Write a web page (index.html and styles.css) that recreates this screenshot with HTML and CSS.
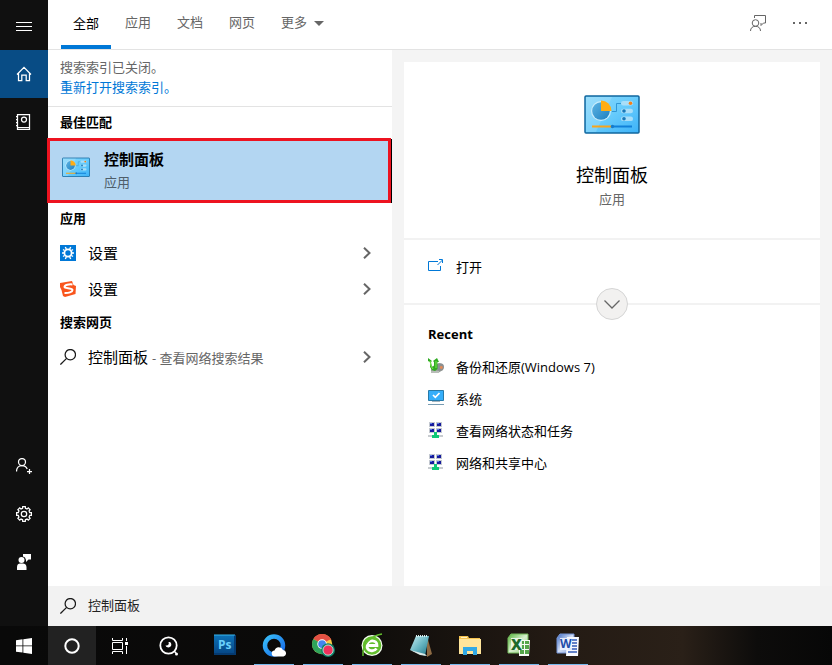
FILE: index.html
```html
<!DOCTYPE html>
<html lang="zh-CN">
<head>
<meta charset="utf-8">
<meta name="viewport" content="width=device-width, initial-scale=1">
<title>控制面板</title>
<link rel="stylesheet" href="styles.css">
</head>
<body>
<svg class="defs" aria-hidden="true">
  <defs>
    <linearGradient id="panel-bg" x1="0" y1="0" x2="1" y2="1">
      <stop offset="0" stop-color="#8ad8fb"/><stop offset=".5" stop-color="#68ccfc"/><stop offset="1" stop-color="#3cb2f8"/>
    </linearGradient>
    <linearGradient id="pie-blue" x1="0" y1="0" x2="1" y2="1">
      <stop offset="0" stop-color="#5db4e4"/><stop offset="1" stop-color="#1d7fc0"/>
    </linearGradient>
    <linearGradient id="ring-blue" x1="0" y1="0" x2="1" y2="1">
      <stop offset="0" stop-color="#38bdf8"/><stop offset="1" stop-color="#1668e8"/>
    </linearGradient>
    <linearGradient id="note-teal" x1="0" y1="0" x2="1" y2="1">
      <stop offset="0" stop-color="#c8eef2"/><stop offset=".5" stop-color="#69b6c2"/><stop offset="1" stop-color="#1d7386"/>
    </linearGradient>
    <linearGradient id="sheet-green" x1="0" y1="0" x2="1" y2="1">
      <stop offset="0" stop-color="#57b53c"/><stop offset=".5" stop-color="#d8efcf"/><stop offset="1" stop-color="#8dcb75"/>
    </linearGradient>
    <linearGradient id="doc-blue" x1="0" y1="0" x2="1" y2="1">
      <stop offset="0" stop-color="#3d6bc4"/><stop offset=".5" stop-color="#d3def4"/><stop offset="1" stop-color="#7f9fdd"/>
    </linearGradient>
    <linearGradient id="ps-blue" x1="0" y1="0" x2="0" y2="1">
      <stop offset="0" stop-color="#0d73b8"/><stop offset="1" stop-color="#064887"/>
    </linearGradient>
    <symbol id="control-panel" viewBox="0 0 56 40">
      <rect x="1" y="2" width="54" height="37" rx="1" fill="url(#panel-bg)" stroke="#10679f" stroke-width="1.5"/>
      <path d="M2 3h26L12 38H2z" fill="#fff" opacity=".15"/>
      <circle cx="17" cy="17" r="10" fill="#c9ecfb"/>
      <circle cx="17" cy="17" r="8.8" fill="url(#pie-blue)"/>
      <path d="M17 17V6.500A10.500 10.500 0 0 1 27.500 17z" fill="#ffad14"/>
      <path d="M28 17.500h4.500v-8H37" fill="none" stroke="#3197d5"/>
      <rect x="37" y="7" width="12" height="4.500" rx="2.200" fill="#a9def8"/><circle cx="46.500" cy="9.200" r="1.800" fill="#f28018"/>
      <rect x="37" y="14.800" width="12" height="4.500" rx="2.200" fill="#a9def8"/><circle cx="40" cy="17" r="1.800" fill="#1878b8"/>
      <rect x="37" y="22.600" width="12" height="4.500" rx="2.200" fill="#a9def8"/><circle cx="40" cy="24.800" r="1.800" fill="#1878b8"/>
      <path d="M8 32.500h20" stroke="#f9a51a" stroke-width="2"/><path d="M30 32.500h18" stroke="#1180d8" stroke-width="2"/>
      <circle cx="28.500" cy="32.500" r="1.800" fill="#147ccd"/>
    </symbol>
    <symbol id="gear" viewBox="-8 -8 16 16">
      <path d="M5.720 -1.430L7.390 -1.300 7.390 1.300 5.720 1.430 5.060 3.030 6.140 4.310 4.310 6.140 3.030 5.060 1.430 5.720 1.300 7.390 -1.300 7.390 -1.430 5.720 -3.030 5.060 -4.310 6.140 -6.140 4.310 -5.060 3.030 -5.720 1.430 -7.390 1.300 -7.390 -1.300 -5.720 -1.430 -5.060 -3.030 -6.140 -4.310 -4.310 -6.140 -3.030 -5.060 -1.430 -5.720 -1.300 -7.390 1.300 -7.390 1.430 -5.720 3.030 -5.060 4.310 -6.140 6.140 -4.310 5.060 -3.030z"/>
      <circle r="2.700"/>
    </symbol>
    <symbol id="search" viewBox="0 0 16 16">
      <circle cx="10.300" cy="5.700" r="5.200"/><path d="M6.600 9.400L.4 15.600"/>
    </symbol>
    <symbol id="chevron" viewBox="0 0 8 12"><path d="M1 .8L6.500 6 1 11.200"/></symbol>
    <symbol id="network" viewBox="0 0 16 16">
      <path d="M1 0h6v5H1zM8 0h6v5H8zM1 6h6v5H1zM8 6h6v5H8z" fill="#c3c8d0"/>
      <path d="M2 1h4v3H2zM9 1h4v3H9zM2 7h4v3H2zM9 7h4v3H9z" fill="#161a9c"/>
      <path d="M2 1h2v1H2zM9 1h2v1H9zM2 7h2v1H2zM9 7h2v1H9z" fill="#5a7ce8"/>
      <path d="M0 13h15v2H0z" fill="#c8ccd0"/><path d="M6 10h3v3h2v3H4v-3h2z" fill="#10c878"/>
    </symbol>
  </defs>
</svg>

<div class="screen">
  <div class="search-window">
    <nav class="rail" aria-label="导航">
      <button class="rail-item" aria-label="菜单"><svg class="icon16 line" viewBox="0 0 16 16"><path d="M0 4.500h16M0 8.500h16M0 12.500h16"/></svg></button>
      <button class="rail-item rail-item--active" aria-label="主页"><svg class="icon16 line bold" viewBox="0 0 16 16"><path d="M1 8.500L8 1.300l7 7.200M2.500 7.500v7h3.300V9h4.400v5.500h3.300v-7"/></svg></button>
      <button class="rail-item" aria-label="笔记本"><svg class="icon16 line bold" viewBox="0 0 16 16"><path d="M1.500 .5h12v15h-12zM2 13.500h11.500M0 2.500h2M0 5.500h2M0 8.500h2M0 11.500h2"/><circle cx="8" cy="5.500" r="2.500"/></svg></button>
      <span class="rail-space"></span>
      <button class="rail-item" aria-label="登录"><svg class="icon16 line bold" viewBox="0 0 16 16"><circle cx="6" cy="4" r="3.500"/><path d="M.5 13.500c0-3.500 2.200-6 5.500-6 2.500 0 4.500 1.400 5.200 3.500M13.500 11v5M11 13.500h5"/></svg></button>
      <button class="rail-item" aria-label="设置"><svg class="icon16 line bold"><use href="#gear"/></svg></button>
      <button class="rail-item" aria-label="反馈"><svg class="icon16" viewBox="0 0 16 16" fill="#fff"><path d="M7 0h8v5.500h-2.500L10 8V6L9 3.500 7 2.500z"/><circle cx="5.500" cy="6" r="3"/><path d="M1 16v-3c0-2.500 1.500-3.500 3-3.500h3c1.500 0 3.500 1 3.500 3.500v3z"/></svg></button>
    </nav>

    <div class="content">
      <header class="topbar">
        <div class="tabs">
          <button class="tab tab--active">全部</button>
          <button class="tab">应用</button>
          <button class="tab">文档</button>
          <button class="tab">网页</button>
          <button class="tab tab--more">更多<svg class="caret" viewBox="0 0 10 5"><path d="M0 0h10L5 5z" fill="#666"/></svg></button>
        </div>
        <div class="actions">
          <button aria-label="反馈"><svg class="icon16 line grey" viewBox="0 0 16 16"><circle cx="5.500" cy="8" r="3.300"/><path d="M.5 16c0-3 2-4.700 5-4.700s5 1.700 5 4.700M4.500 3V.5h11V8h-2l-2.500 2.500V8"/></svg></button>
          <button aria-label="更多选项"><svg class="icon16" viewBox="0 0 16 16" fill="#666"><path d="M1 7h2v2H1zM7 7h2v2H7zM13 7h2v2h-2z"/></svg></button>
        </div>
      </header>

      <main class="panes">
        <section class="results">
          <div class="notice"><p>搜索索引已关闭。</p><a href="#">重新打开搜索索引。</a></div>
          <h2 class="group">最佳匹配</h2>
          <button class="best">
            <svg class="best-icon"><use href="#control-panel"/></svg>
            <span class="best-text"><strong>控制面板</strong><span>应用</span></span>
          </button>
          <h2 class="group">应用</h2>
          <button class="result">
            <svg class="icon16" viewBox="0 0 16 16"><path fill="#0078d7" d="M0 0h16v16H0z"/><circle cx="8" cy="8" r="3.600" fill="none" stroke="#fff" stroke-width="1.800"/><path d="M12 8h2M2 8h2M9.700 4l1-2M6.300 4l-1-2M9.700 12l1 2M6.300 12l-1 2M11.500 5.500l1.500-1M4.500 5.500L3 4.500M11.500 10.500l1.500 1M4.500 10.500L3 11.500" stroke="#fff" stroke-width="1.400"/></svg>
            <span class="result-name">设置</span><svg class="chevron"><use href="#chevron"/></svg>
          </button>
          <button class="result">
            <svg class="icon16" viewBox="0 0 16 16"><path fill="#f9551d" d="M0 2L12 0l1.500 4L16 5l-.5 8L5 16 3 15 1.500 9 0 6z"/><path d="M12.500 3.500C9 3 4.500 4 4.500 6c0 1.800 8 .5 8 3 0 2-4 3.200-8 3" fill="none" stroke="#fff" stroke-width="2"/></svg>
            <span class="result-name">设置</span><svg class="chevron"><use href="#chevron"/></svg>
          </button>
          <h2 class="group">搜索网页</h2>
          <button class="result">
            <svg class="icon16 line dark bold"><use href="#search"/></svg>
            <span class="result-name">控制面板 <small>- 查看网络搜索结果</small></span><svg class="chevron"><use href="#chevron"/></svg>
          </button>
        </section>

        <section class="detail">
          <div class="hero">
            <svg class="hero-icon"><use href="#control-panel"/></svg>
            <h1>控制面板</h1>
            <p>应用</p>
          </div>
          <div class="open">
            <button class="detail-row"><svg class="icon16 line blue" viewBox="0 0 16 16"><path d="M10 3.500H.5v9h12V8M9.500 7L14.500 2M11 1.500h3.500V5"/></svg><span>打开</span></button>
            <button class="expand" aria-label="展开"><svg viewBox="0 0 16 9"><path d="M.5 .5L8 8 15.500 .5" fill="none" stroke="#666" stroke-width="1.300"/></svg></button>
          </div>
          <div class="recent">
            <h2>Recent</h2>
            <button class="detail-row"><svg class="icon16" viewBox="0 0 16 16"><path d="M3 9l8-4 4 2v5l-5 3H3z" fill="#9aa09a"/><circle cx="12.300" cy="9" r="3.700" fill="#8b8f91"/><circle cx="13.300" cy="9.500" r="1.400" fill="#e78a54"/><path d="M0 0l4 3-1 1 1 5 2-1V4L5 3l4-3 2 4H9.500v7L7 13l-3-1-2-3V4L0 3z" fill="#2faa22"/><path d="M2 3l1 5 2 3M8 3v7" stroke="#7bea4d" fill="none"/><path d="M3 13h8v2H3z" fill="#b9bdb9"/></svg><span>备份和还原(Windows 7)</span></button>
            <button class="detail-row"><svg class="icon16" viewBox="0 0 16 16"><path d="M.5 .5h15v10H.5z" fill="#35aefa" stroke="#277aa9"/><path d="M5 5l2.300 2.300L11.500 3" fill="none" stroke="#fff" stroke-width="1.700"/><path d="M4 11.500h8" stroke="#a4b4bf"/><path d="M0 14.500h16" stroke="#779bb2"/></svg><span>系统</span></button>
            <button class="detail-row"><svg class="icon16"><use href="#network"/></svg><span>查看网络状态和任务</span></button>
            <button class="detail-row"><svg class="icon16"><use href="#network"/></svg><span>网络和共享中心</span></button>
          </div>
        </section>
      </main>

      <label class="searchbar">
        <svg class="icon16 line dark bold"><use href="#search"/></svg>
        <input type="text" value="控制面板" aria-label="搜索">
      </label>
    </div>
  </div>

  <footer class="taskbar">
    <button class="sys" aria-label="开始"><svg class="icon16" viewBox="0 0 16 16" fill="#fff"><path d="M0 2.200L6.500 1.300v6.200H0zM7.300 1.200L16 0v7.500H7.300zM0 8.300h6.500v6.200L0 13.700zM7.300 8.300H16V16l-8.700-1.300z"/></svg></button>
    <button class="sys sys--active" aria-label="搜索"><svg class="icon16" viewBox="0 0 16 16"><circle cx="8" cy="8" r="6.700" fill="none" stroke="#fff" stroke-width="2"/></svg></button>
    <button class="sys" aria-label="任务视图"><svg class="icon16 line" viewBox="0 0 16 16"><path d="M.5 0v2.500h10V0M.5 4.500h10v7H.5zM.5 16v-2.500h10V16M14.500 0v3M14.500 8v8"/><path d="M13 4h3v3h-3z" fill="#fff" stroke="none"/></svg></button>
    <button class="sys" aria-label="快速搜索"><svg class="icon20" viewBox="0 0 20 20"><circle cx="10.500" cy="9.500" r="8.200" fill="none" stroke="#fff" stroke-width="1.800"/><path d="M12 6a3 3 0 1 1-4.500 3.500C10 10 11.500 8.500 10.500 6z" fill="#fff"/><path d="M16 15l2 2" stroke="#fff" stroke-width="1.500"/><circle cx="18.500" cy="18" r="1.500" fill="#fff"/></svg></button>
    <div class="apps">
      <button class="app" aria-label="Photoshop"><svg viewBox="0 0 24 24"><path fill="#053a70" d="M1 2h22v20H1z"/><path fill="url(#ps-blue)" d="M1 2h20v18H1z"/><path d="M1 2h21" stroke="#38b6ee"/><text class="ps" x="5" y="16">Ps</text></svg></button>
      <button class="app app--open" aria-label="QQ浏览器"><svg viewBox="0 0 24 24"><circle cx="12" cy="12.500" r="9" fill="none" stroke="url(#ring-blue)" stroke-width="4.500"/><path d="M13 23.500a3 3 0 0 1-.5-6 4.500 4.500 0 0 1 8.500-.5 3.300 3.300 0 0 1 .5 6.500z" fill="#fff"/></svg></button>
      <button class="app app--open" aria-label="Chrome"><svg viewBox="0 0 26 26"><circle cx="12" cy="12" r="11" fill="#f8ca45"/><path d="M12 12L2.500 6.500A11 11 0 0 1 21.500 6.500z" fill="#e35044"/><path d="M12 12L2.500 6.500A11 11 0 0 0 12 23z" fill="#2fa45b"/><path d="M12 7h10l-.5-1H4z" fill="#e35044"/><circle cx="12" cy="12" r="5.200" fill="#fff"/><circle cx="12" cy="12" r="4.200" fill="#4385ef"/><circle cx="18.500" cy="18.500" r="7.500" fill="#0e8068"/><circle cx="18.500" cy="18.500" r="5.500" fill="#f0315c" stroke="#b9e4d6"/></svg></button>
      <button class="app app--open" aria-label="浏览器"><svg viewBox="0 0 24 24"><circle cx="12" cy="12.500" r="10.500" fill="#f5fff0"/><circle cx="12" cy="12.500" r="9.300" fill="#62bd2d"/><path d="M7 12.500h10c.4-6-9.500-6.500-10 0-.3 6 7 6.500 9.500 3" fill="none" stroke="#fff" stroke-width="2.800"/><path d="M3 23C2 12 10 3 22 1" fill="none" stroke="#62bd2d" stroke-width="1.500"/></svg></button>
      <button class="app app--open" aria-label="便笺"><svg viewBox="0 0 24 24"><path d="M18 3l5 18-5 3z" fill="#8e6b44"/><path d="M7 3l13 0-4 20-15-6z" fill="url(#note-teal)"/><path d="M1 17l15 4 2 2-7-1z" fill="#dce9e7"/><path d="M7 3h12" stroke="#d8eced" stroke-width="2" stroke-dasharray="1 1"/></svg></button>
      <button class="app app--open" aria-label="文件资源管理器"><svg viewBox="0 0 24 24"><path d="M1 3h9l1 2h11v16H1z" fill="#f5c34f"/><path d="M1 6h22v15H1z" fill="#ffe59b"/><path d="M3 4.500h6" stroke="#fff2c2"/><path d="M5 22v-8h14v8h-4v-4H9v4z" fill="#31a9e6"/></svg></button>
      <button class="app app--open" aria-label="Excel"><svg viewBox="0 0 24 24"><path d="M4 1h17v19H1V5z" fill="url(#sheet-green)" stroke="#72b95b"/><path d="M12 7h11l-1 16H12z" fill="#f7fbf4"/><path d="M14 8h3v3h-3zM18 8h4v3h-4zM14 12h3v4h-3zM18 12h4v4h-4zM13 17h4v4h-4zM18 17h4v4h-4z" fill="#55a64a"/><path d="M4 5h11v12H4z" fill="#eef8ea" opacity=".9"/><text class="excel" x="4" y="17">X</text></svg></button>
      <button class="app app--open" aria-label="Word"><svg viewBox="0 0 24 24"><path d="M4 1h14v19H1V5z" fill="url(#doc-blue)" stroke="#7594d5"/><path d="M11 4h12l-1 19H10z" fill="#f8faff"/><path d="M16 7h5M16 10h5M16 13h5M12 16h9M12 19h9" stroke="#315ab7" stroke-width="1.400"/><path d="M4 5h12v12H4z" fill="#edf2ff" opacity=".9"/><text class="word" x="4" y="15">W</text></svg></button>
    </div>
  </footer>
</div>
</body>
</html>
```

FILE: styles.css
```css
* { box-sizing: border-box; }

body {
  margin: 0;
  font-family: "Open Sans", "Noto Sans CJK SC", sans-serif;
  font-size: 13px;
  line-height: 20px;
  color: #000;
}

h1, h2, p { margin: 0; }

button {
  padding: 0;
  border: 0;
  background: none;
  color: inherit;
  font: inherit;
  text-align: left;
}

svg { display: block; flex: none; }
.defs { position: absolute; width: 0; height: 0; }
.icon16 { width: 16px; height: 16px; }
.icon20 { width: 20px; height: 20px; }
.line { fill: none; stroke: #fff; stroke-width: 1px; }
.bold { stroke-width: 1.25; }
.dark { stroke: #1a1a1a; }
.grey { stroke: #666; }
.blue { stroke: #0078d7; }

.screen { display: flex; flex-direction: column; min-height: 100vh; }
.search-window { display: flex; flex: 1; }

/* Left rail */
.rail {
  display: flex;
  flex-direction: column;
  width: 48px;
  padding: 2px 0 40px;
  background: #101010;
}
.rail-item {
  display: flex;
  align-items: center;
  justify-content: center;
  height: 48px;
}
.rail-item--active { background: #084c85; }
.rail-space { flex: 1; }

.content { display: flex; flex: 1; flex-direction: column; min-width: 0; }

/* Filter tabs */
.topbar {
  display: flex;
  justify-content: space-between;
  height: 50px;
  padding: 0 24px 0 12px;
  border-bottom: 1px solid #e3e3e3;
}
.tabs { display: flex; }
.tab {
  display: flex;
  align-items: center;
  padding: 0 13px 6px;
  color: #666;
}
.tab--active {
  margin: 0 1px;
  padding: 0 12px;
  border-bottom: 4px solid #0078d7;
  color: #000;
}
.tab--more { gap: 7px; }
.caret { width: 10px; height: 5px; margin-top: 4px; }
.actions { display: flex; align-items: center; gap: 26px; padding-bottom: 3px; }

.panes { display: flex; flex: 1; background: #f4f4f4; }

/* Result list */
.results { flex: none; width: 344px; background: #fff; }
.notice {
  padding: 7px 12px 9px;
  border-bottom: 1px solid #e3e3e3;
  color: #666;
}
.notice a { display: block; color: #0078d7; text-decoration: none; }
.group {
  padding: 0 12px 2px;
  font-size: 13px;
  font-weight: 700;
  line-height: 30px;
}
.best {
  position: relative;
  display: flex;
  gap: 14px;
  width: 100%;
  height: 64px;
  padding: 10px 14px;
  border-right: 1px solid #000;
  background: #b3d6f2;
}
.best::after {
  position: absolute;
  inset: -1px 0 0 -1px;
  border: 3px solid #ed1320;
  content: "";
}
.best-icon { width: 28px; height: 20px; margin-top: 8px; }
.best-text { display: flex; flex-direction: column; gap: 3px; color: #4f5e6a; }
.best-text strong { color: #000; font-size: 15px; }
.result {
  display: flex;
  align-items: center;
  gap: 12px;
  width: 100%;
  height: 36px;
  padding: 0 21px 0 12px;
}
.result-name { flex: 1; font-size: 15px; }
.result-name small { color: #666; font-size: 13px; }
.chevron {
  width: 8px;
  height: 12px;
  fill: none;
  stroke: #666;
  stroke-width: 2px;
}

/* Detail pane */
.detail { flex: 1; margin: 12px 12px 0; background: #fff; }
.hero {
  display: flex;
  flex-direction: column;
  align-items: center;
  padding: 32px 24px 28px;
  border-bottom: 2px solid #f2f2f2;
}
.hero-icon { width: 56px; height: 40px; }
.hero h1 {
  margin-top: 29px;
  font-size: 18px;
  font-weight: 400;
  line-height: 24px;
}
.hero p { margin: 2px 0 1px; color: #666; }
.open {
  position: relative;
  padding: 11px 24px 20px;
  border-bottom: 2px solid #f2f2f2;
}
.detail-row {
  display: flex;
  align-items: center;
  gap: 12px;
  width: 100%;
  height: 32px;
}
.detail-row .icon16 { margin-bottom: 2px; }
.expand {
  position: absolute;
  bottom: -17px;
  left: calc(50% - 16px);
  display: flex;
  align-items: center;
  justify-content: center;
  width: 32px;
  height: 32px;
  border: 1px solid #d5d5d5;
  border-radius: 50%;
  background: #f2f1f0;
}
.expand svg { width: 16px; height: 9px; }
.recent { padding: 19px 24px; }
.recent h2 { margin-bottom: 7px; font-size: 13px; font-weight: 700; }

/* Search box */
.searchbar {
  display: flex;
  align-items: center;
  gap: 12px;
  height: 40px;
  padding: 0 12px;
  background: #f2f2f2;
}
.searchbar input {
  flex: 1;
  min-width: 0;
  padding: 0 0 2px;
  border: 0;
  outline: 0;
  background: none;
  color: #222;
  font: inherit;
}

/* Taskbar */
.taskbar {
  display: flex;
  height: 39px;
  background: linear-gradient(90deg, #090909 0%, #0b0a09 40%, #241b14 68%, #2a2018 82%, #0d0c0b 91%, #070707 100%);
}
.sys {
  display: flex;
  align-items: center;
  justify-content: center;
  width: 48px;
}
.sys--active { background: #222; }
.apps { display: flex; gap: 9px; padding-left: 13px; }
.app {
  display: flex;
  align-items: center;
  justify-content: center;
  width: 40px;
  border-bottom: 1px solid transparent;
}
.app svg { width: 24px; height: 24px; }
.app--open { border-bottom-color: #76b9ed; }
.ps { fill: #6bd0fa; font: 700 12px "Open Sans", sans-serif; }
.excel { fill: #1d6a2b; font: 800 15px "Open Sans", sans-serif; }
.word { fill: #234daa; font: 700 12px "Open Sans", sans-serif; }
```
